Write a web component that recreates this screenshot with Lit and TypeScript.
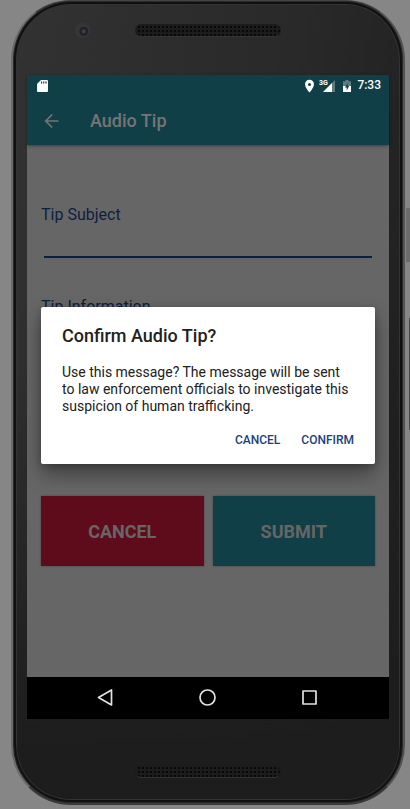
import { LitElement, html, css, svg } from "lit";
import { customElement, state } from "lit/decorators.js";

@customElement("status-bar")
class StatusBar extends LitElement {
  static styles = css`
    :host {
      display: flex;
      align-items: center;
      justify-content: space-between;
      height: 21px;
      padding: 0 8px 0 9px;
      color: #fff;
      font: 500 12px/21px Roboto, sans-serif;
    }
    .group { display: flex; align-items: center; }
    svg { display: block; }
    .pin { margin-right: 4px; }
    .signal { margin-right: 6px; }
    .battery { margin-right: 5px; }
    .net { font: 700 7px Roboto, sans-serif; fill: #fff; }
  `;
  render() {
    return html`
      <svg width="13" height="14" viewBox="0 0 13 14" fill="#fff">
        <path d="M5 1h6q1 0 1 1v10q0 1-1 1H2q-1 0-1-1V5zM5 2.5V4.500h1.200V2.500zM7.200 2.500V4.500h1.200V2.500zM9.400 2.500V4.500h1.200V2.500z" fill-rule="evenodd" />
      </svg>
      <div class="group">
        <svg class="pin" width="11" height="14" viewBox="0 0 11 14" fill="#fff" fill-rule="evenodd">
          <path d="M5.500 0.800A4.500 4.500 0 0 0 1 5.300C1 8.700 5.500 13.500 5.500 13.500S10 8.700 10 5.300A4.500 4.500 0 0 0 5.500 0.800zM5.500 3.900a1.500 1.500 0 1 1 0 3a1.500 1.500 0 1 1 0-3z" />
        </svg>
        <svg class="signal" width="17" height="14" viewBox="0 0 17 14">
          <path d="M16 1V13H4z" fill="#5d7c81" />
          <path d="M13 4V13H4z" fill="#fff" />
          <text class="net" x="0" y="6">3G</text>
        </svg>
        <svg class="battery" width="10" height="14" viewBox="0 0 10 14">
          <path d="M3.500 1h3v1.200H9V7H1V2.200h2.500z" fill="#5d7c81" />
          <path d="M1 7h8v6H1z" fill="#fff" />
          <path d="M5.600 4L3 8.600h1.700v3L7.200 7H5.600z" fill="#113f47" />
        </svg>
        <time>7:33</time>
      </div>
    `;
  }
}

@customElement("nav-bar")
class NavBar extends LitElement {
  static styles = css`
    :host {
      display: flex;
      justify-content: center;
      align-items: center;
      gap: 78px;
      height: 42px;
      background: #000;
    }
    button { display: block; width: 24px; height: 24px; padding: 0; border: 0; background: none; }
    svg { display: block; fill: none; stroke: #e2e2e2; stroke-width: 1.7; stroke-linejoin: round; }
  `;
  private key(label: string, shape: unknown) {
    return html`<button aria-label=${label}><svg width="24" height="24" viewBox="0 0 24 24">${shape}</svg></button>`;
  }
  render() {
    return html`
      ${this.key("Back", svg`<path d="M17.500 4V19L4.500 11.500z"/>`)}
      ${this.key("Home", svg`<circle cx="11.500" cy="11.500" r="7.500"/>`)}
      ${this.key("Recent apps", svg`<rect x="5" y="5" width="13" height="13"/>`)}
    `;
  }
}

@customElement("app-root")
class AppRoot extends LitElement {
  @state() private open = true;

  static styles = css`
    :host {
      display: flex;
      box-sizing: border-box;
      min-height: 100vh;
      padding: 0 5px 4px 11px;
      background: #868686;
      font-family: Roboto, sans-serif;
      position: relative;
    }
    * { box-sizing: border-box; }
    button { font-family: inherit; border: 0; padding: 0; }
    .side-key { position: absolute; right: 0; top: 208px; width: 4px; height: 54px; background: #6c6c6c; }
    .volume { top: 318px; width: 1px; height: 112px; background: #494949; }
    .device {
      position: relative;
      flex: 1;
      display: flex;
      flex-direction: column;
      padding: 0 14px;
      border: 2px solid #5a5a5a;
      border-top-color: #444;
      border-left-color: #6a6a6a;
      border-right-color: #555252;
      border-bottom-color: #3a3a3a;
      border-top-width: 1px;
      border-radius: 60px;
      background: linear-gradient(100deg, #323233, #29292a 55%, #1d1d1e);
      box-shadow: inset 0 0 0 1px #2a2a2a, inset 0 0 0 3px #101010, inset 0 0 0 4px #333;
    }
    .device::before {
      content: "";
      position: absolute;
      inset: 45% 4px 4px 4px;
      border-radius: 0 0 54px 54px;
      background: linear-gradient(#1d1d1e00, #1d1d1e 90%);
    }
    .bezel { position: relative; display: flex; justify-content: center; height: 74px; padding-top: 23px; }
    .bezel.bottom { height: 84px; padding-top: 46px; }
    .speaker {
      width: 146px;
      height: 13px;
      border-radius: 7px;
      background: radial-gradient(circle, #080808 0 1px, #1c1c1c 1px) 1px 0 / 4px 4px;
      border: 1px solid #1c1c1c;
      border-bottom-color: #333;
    }
    .camera {
      position: absolute;
      left: 48px;
      top: 22px;
      width: 15px;
      height: 15px;
      border-radius: 50%;
      background: radial-gradient(circle at 58% 55%, #4a3a48 0 1px, #211f29 3px, #232227 4px, #363636 5px);
    }
    .screen { position: relative; flex: 1; display: flex; flex-direction: column; background: #666; }
    .top { background: #113f47; box-shadow: 0 1px 3px #0006; }
    .app-bar { display: flex; align-items: center; height: 49px; padding-left: 15px; color: #757575; }
    .back { width: 20px; height: 20px; background: none; margin-right: 28px; }
    .back svg { display: block; }
    h1 { margin: 0; font-size: 18px; line-height: 24px; font-weight: 500; }
    form { flex: 1; display: flex; flex-direction: column; padding: 58px 14px 0; }
    label { color: #0b1f42; font-size: 16px; line-height: 24px; }
    input, textarea {
      margin: 0 3px;
      border: 0;
      border-bottom: 2px solid #0b1f42;
      background: none;
      font: 16px/24px Roboto, sans-serif;
      outline: none;
      resize: none;
    }
    input { height: 31px; margin-bottom: 37px; }
    textarea { height: 120px; margin-bottom: 57px; }
    .actions { display: grid; grid-template-columns: 1fr 1fr; gap: 9px; }
    .action { height: 70px; color: #666; font-size: 18px; font-weight: 700; background: #113f47; box-shadow: 0 0 2px #0005; }
    .action.cancel { background: #5e0c1c; }
    .layer {
      position: absolute;
      inset: 0;
      display: flex;
      align-items: center;
      padding: 19px 14px 42px;
    }
    .dialog {
      flex: 1;
      padding: 17px 21px 13px;
      border-radius: 2px;
      background: #fff;
      color: #212121;
      box-shadow: 0 10px 20px #0006, 0 2px 6px #0003;
    }
    h2 { margin: 0 0 16px; font-size: 18px; line-height: 24px; font-weight: 500; }
    p { margin: 0; font-size: 14px; line-height: 17px; }
    .choices { display: flex; justify-content: flex-end; gap: 21px; margin-top: 14px; }
    .choices button { height: 22px; background: none; color: #1a3f82; font-size: 12px; font-weight: 500; }
  `;

  private close() {
    this.open = false;
  }

  render() {
    return html`
      <div class="side-key"></div>
      <div class="side-key volume"></div>
      <div class="device">
        <div class="bezel"><div class="camera"></div><div class="speaker"></div></div>
        <div class="screen">
          <header class="top">
            <status-bar></status-bar>
            <div class="app-bar">
              <button class="back" aria-label="Go back">
                <svg width="20" height="20" viewBox="0 0 20 20" fill="none" stroke="#757575" stroke-width="1.700">
                  <path d="M16.500 10H4M10.200 3.500L3.700 10l6.500 6.500" />
                </svg>
              </button>
              <h1>Audio Tip</h1>
            </div>
          </header>
          <form @submit=${(e: Event) => e.preventDefault()}>
            <label for="subject">Tip Subject</label>
            <input id="subject" type="text" />
            <label for="info">Tip Information</label>
            <textarea id="info"></textarea>
            <div class="actions">
              <button class="action cancel" type="button">CANCEL</button>
              <button class="action" type="submit">SUBMIT</button>
            </div>
          </form>
          ${this.open
            ? html`<div class="layer">
                <section class="dialog" role="dialog" aria-labelledby="title">
                  <h2 id="title">Confirm Audio Tip?</h2>
                  <p>Use this message? The message will be sent to law enforcement officials to investigate this suspicion of human trafficking.</p>
                  <div class="choices">
                    <button @click=${this.close}>CANCEL</button>
                    <button @click=${this.close}>CONFIRM</button>
                  </div>
                </section>
              </div>`
            : null}
          <nav-bar></nav-bar>
        </div>
        <div class="bezel bottom"><div class="speaker"></div></div>
      </div>
    `;
  }
}
